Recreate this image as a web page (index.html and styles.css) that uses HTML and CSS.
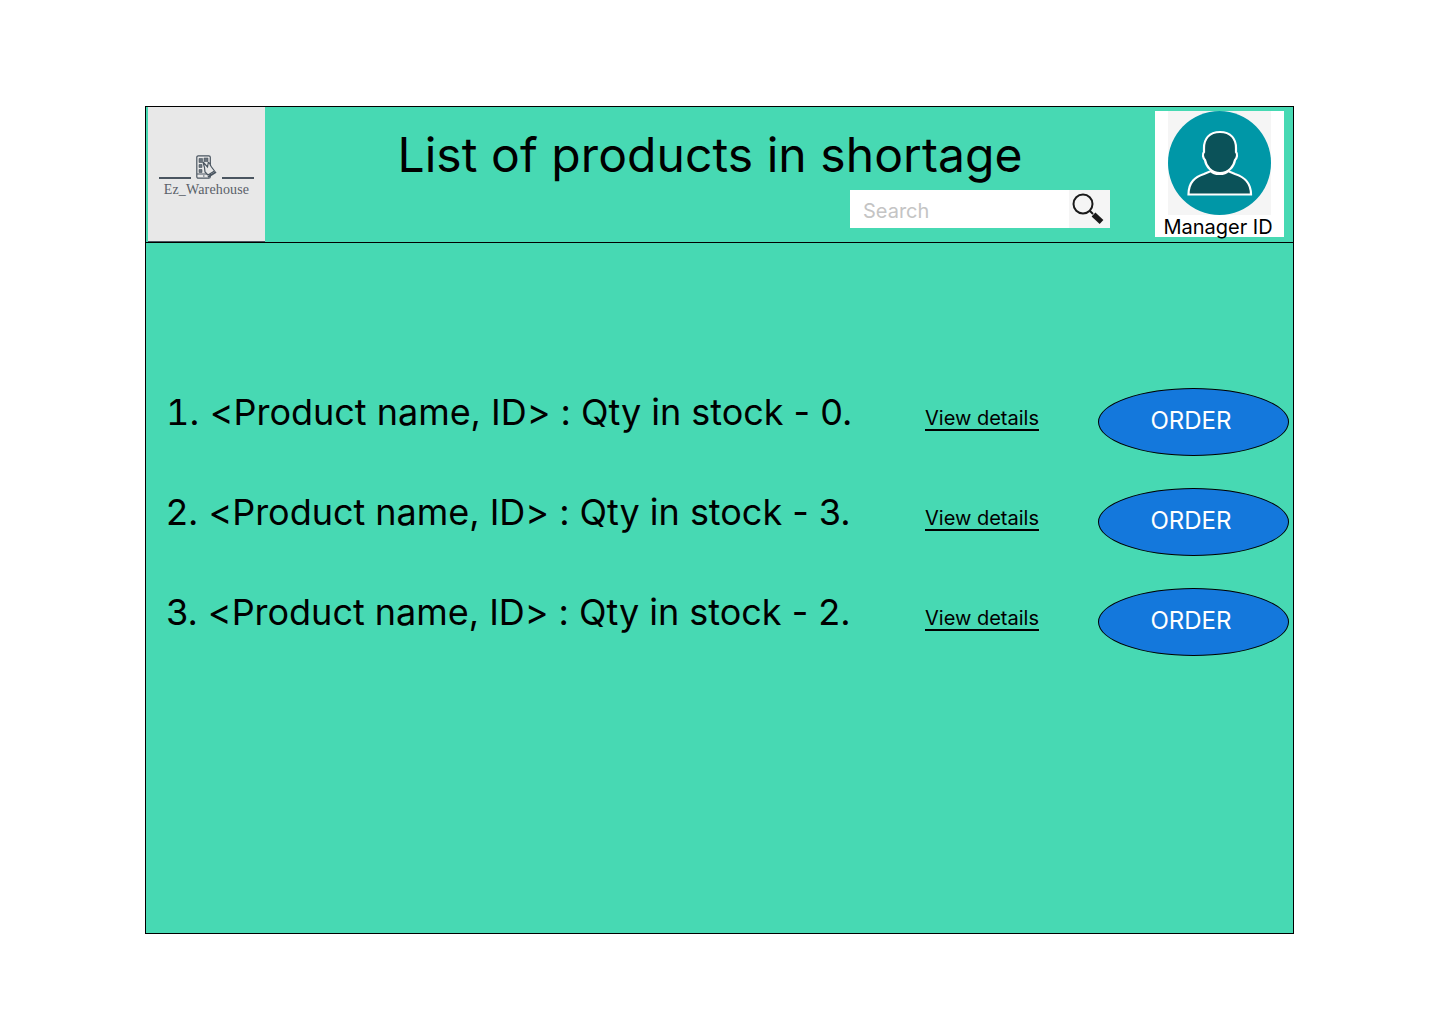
FILE: index.html
```html
<!DOCTYPE html>
<html lang="en">
<head>
  <meta charset="UTF-8">
  <title>List of products in shortage</title>
  <link rel="stylesheet" href="styles.css">
</head>
<body>
  <div class="frame">
    <div class="header">
      <div class="logo">
        <div class="logoMark">
          <span class="logoLine"></span>
          <svg class="logoIcon" width="21" height="24" viewBox="0 0 21 24" fill="none" stroke="#4a5560" stroke-width="1.2">
            <rect x="0.8" y="0.8" width="13.5" height="22.4" rx="1.5"/>
            <path d="M1 19h13M7 21h1.500" />
            <path d="M3 3.500h3.500v4H3zM8 3h4v3.500H8zM3 9.500h3v3H3zM3 14.500h3v3H3z" fill="#6a737c" stroke-width="0.6"/>
            <path d="M7 7l4.500 5 .8-4.500 1.500 1 .5 1.500 1.200 2 3 4-6.500 4-3-3-.5-4.500z" fill="#e8e8e8"/>
            <path d="M12 22l8-5" stroke-width="2"/>
          </svg>
          <span class="logoLine"></span>
        </div>
        <div class="logoName">Ez_Warehouse</div>
      </div>
      <div class="headMid">
        <h1 class="title">List of products in shortage</h1>
        <div class="search">
          <span class="searchText">Search</span>
          <span class="searchBtn">
            <svg width="41" height="38" viewBox="0 0 41 38" fill="none">
              <circle cx="14" cy="14" r="9.500" stroke="#1a1a1a" stroke-width="2"/>
              <path d="M21 21l3 3" stroke="#1a1a1a" stroke-width="2"/>
              <path d="M24.500 24.500l8 7.500" stroke="#1a1a1a" stroke-width="5.500"/>
            </svg>
          </span>
        </div>
      </div>
      <div class="profile">
        <div class="avatarBox">
          <svg width="103" height="104" viewBox="0 0 103 104">
            <ellipse cx="51.500" cy="52" rx="51.500" ry="52" fill="#0097a7"/>
            <path d="M20.500 83.500C20.500 71 27 66 36 63L43 60C46 64 57 64 60 60L67 63C76 66 83 71 83 83.500Z" fill="#0b5259" stroke="#fff" stroke-width="2.200"/>
            <path d="M52 21C41 21 36 28 36 37L36 41C34 43 35 47 37 49C38 55 43 62 52 62C61 62 66 55 67 49C69 47 70 43 68 41L68 37C68 28 63 21 52 21Z" fill="#0b5259" stroke="#fff" stroke-width="2.200"/>
          </svg>
        </div>
        <div class="profileName">Manager ID</div>
      </div>
    </div>

    <ul class="list">
      <li class="row">
        <span class="rowText"><span class="rowOne">1</span>. &lt;Product name, ID&gt; : Qty in stock - 0.</span>
        <a class="details" href="#">View details</a>
        <button class="orderBtn">ORDER</button>
      </li>
      <li class="row">
        <span class="rowText">2. &lt;Product name, ID&gt; : Qty in stock - 3.</span>
        <a class="details" href="#">View details</a>
        <button class="orderBtn">ORDER</button>
      </li>
      <li class="row">
        <span class="rowText">3. &lt;Product name, ID&gt; : Qty in stock - 2.</span>
        <a class="details" href="#">View details</a>
        <button class="orderBtn">ORDER</button>
      </li>
    </ul>
  </div>
</body>
</html>
```

FILE: styles.css
```css
* {
  padding: 0;
  margin: 0;
  box-sizing: border-box;
}

body {
  background-color: #fff;
  font-family: Inter, "Liberation Sans", sans-serif;
  color: #000;
}

.frame {
  margin-top: 106px;
  margin-left: 145px;
  width: 1149px;
  height: 828px;
  border: 1px solid #000;
  background-color: #47d9b3;
}

.header {
  display: flex;
  height: 136px;
  padding-left: 2px;
  border-bottom: 1px solid #000;
}

.logo {
  width: 117px;
  height: 135px;
  background-color: #e8e8e8;
  border-bottom: 1px solid #4a5560;
  padding-top: 48px;
}

.logoMark {
  display: flex;
  justify-content: center;
  align-items: flex-end;
  gap: 5px;
  height: 24px;
  margin-left: -1px;
}

.logoLine {
  width: 32px;
  height: 2px;
  background-color: #4a5560;
}

.logoName {
  margin-top: 2px;
  text-align: center;
  font-family: "Liberation Serif", serif;
  font-size: 14px;
  line-height: 18px;
  letter-spacing: 0.15px;
  color: #5a6068;
}

.headMid {
  width: 890px;
}

.title {
  margin-top: 19px;
  text-align: center;
  font-size: 48px;
  font-weight: 400;
  line-height: 58px;
  letter-spacing: 0.07px;
}

.search {
  display: flex;
  justify-content: space-between;
  width: 260px;
  height: 38px;
  margin-top: 6px;
  margin-left: 585px;
  background-color: #fff;
}

.searchText {
  padding-left: 13px;
  font-size: 20px;
  line-height: 42px;
  color: #c4c4c4;
}

.searchBtn {
  width: 41px;
  height: 38px;
  background-color: #f5f5f5;
}

.profile {
  width: 129px;
  height: 126px;
  margin-top: 4px;
  background-color: #fff;
  text-align: center;
}

.avatarBox {
  width: 103px;
  height: 104px;
  margin-left: 13px;
  background-color: #f5f5f5;
}

.profileName {
  margin-left: -3px;
  font-size: 20px;
  line-height: 24px;
}

.list {
  list-style: none;
  padding-top: 145px;
  padding-left: 20px;
}

.row {
  display: flex;
  height: 68px;
  margin-bottom: 32px;
}

.rowText {
  width: 759px;
  font-size: 36px;
  line-height: 48px;
  letter-spacing: -0.025px;
}

.rowOne {
  font-variant-numeric: tabular-nums;
}

.details {
  width: 173px;
  margin-top: 17px;
  font-size: 20px;
  line-height: 26px;
  color: #000;
  text-decoration: underline;
  text-decoration-thickness: 1.5px;
  text-underline-offset: 4px;
  text-decoration-skip-ink: none;
}

.orderBtn {
  width: 191px;
  height: 68px;
  padding-right: 5px;
  padding-bottom: 4px;
  border: 1px solid #000;
  border-radius: 50%;
  background-color: #1478dc;
  color: #fff;
  font-family: inherit;
  font-size: 24px;
}
```
